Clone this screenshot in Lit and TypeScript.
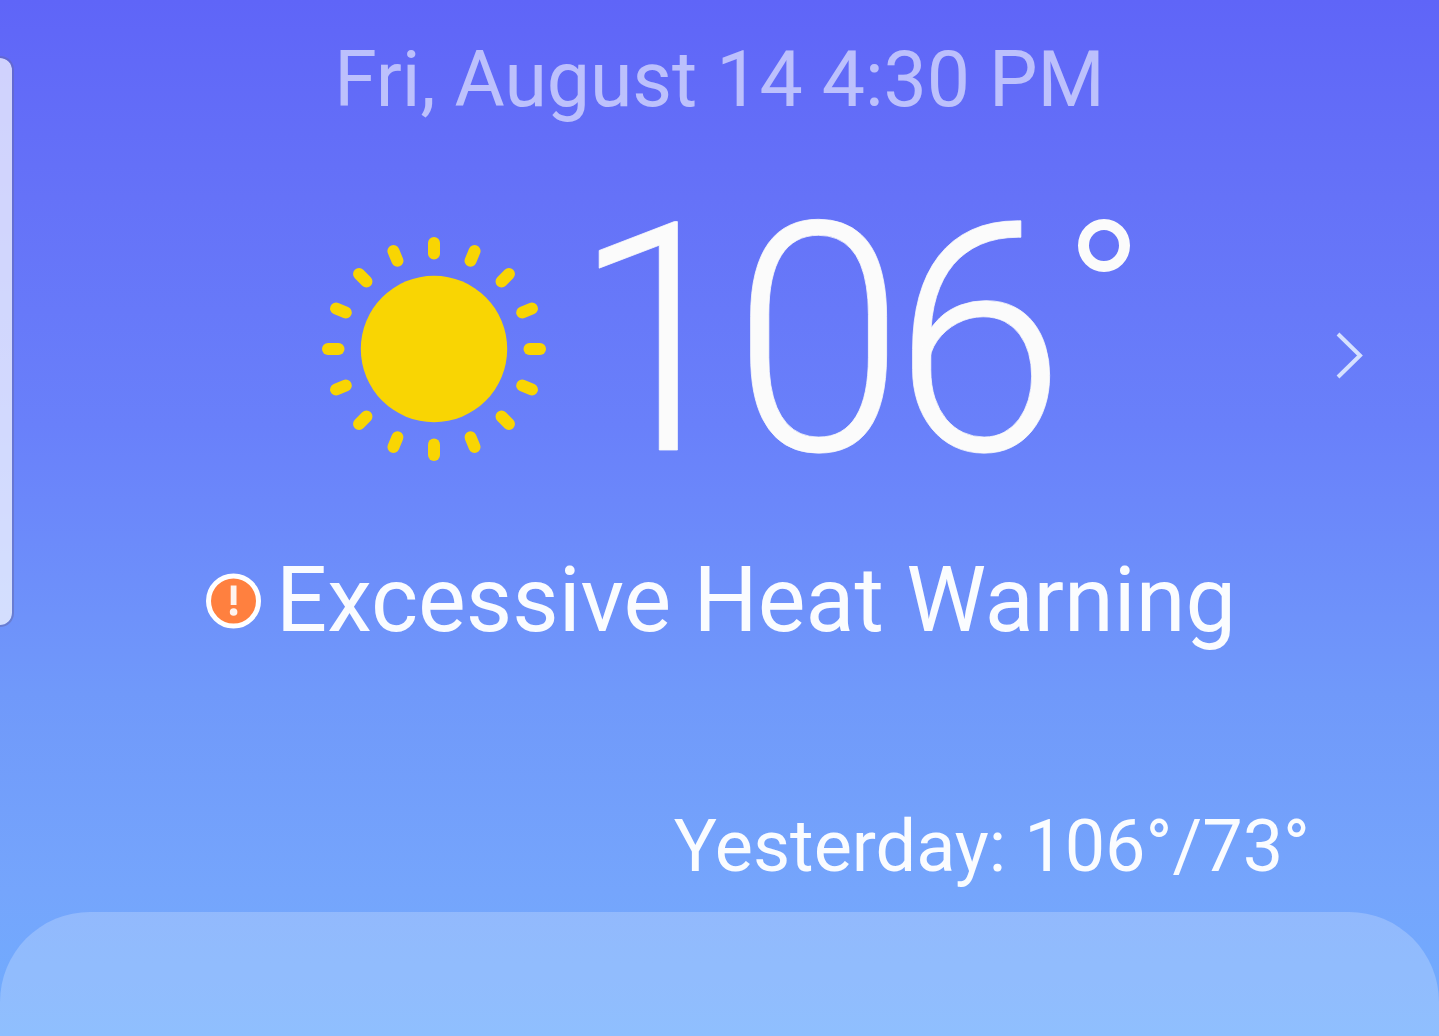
import { css, html, LitElement, svg } from "lit";
import { customElement, property } from "lit/decorators.js";

const RAYS = Array.from({ length: 16 }, (_, i) => i * 22.5);

@customElement("weather-sun")
export class WeatherSun extends LitElement {
  static styles = css`
    :host {
      display: block;
      width: 226px;
      height: 226px;
    }

    svg {
      display: block;
      fill: #f9d503;
    }
  `;

  protected render() {
    return html`
      <svg width="226" height="226" viewBox="-113 -113 226 226">
        <circle r="73.2" />
        ${RAYS.map(angle => svg`
          <rect x="-6" y="-112" width="12" height="22.5" rx="6" transform="rotate(${angle})" />
        `)}
      </svg>
    `;
  }
}

@customElement("app-root")
export class AppRoot extends LitElement {
  static styles = css`
    :host {
      display: flex;
      flex-direction: column;
      position: relative;
      box-sizing: border-box;
      height: 1036px;
      padding-top: 35px;
      overflow: hidden;
      background: linear-gradient(#5f65f8 0, #6572f8 19%, #6980fa 41%, #7099fa 67%, #75a5fc 86%, #70adfe 100%);
      color: #fafcff;
      font-family: Roboto, sans-serif;
      white-space: nowrap;
    }

    .date {
      height: 90px;
      font-size: 77px;
      line-height: 91px;
      letter-spacing: -0.05px;
      text-align: center;
      color: rgba(255, 255, 255, 0.58);
    }

    .current {
      display: flex;
      height: 320px;
      margin-top: 56px;
      padding: 0 75px 0 321px;
    }

    weather-sun {
      margin-top: 55px;
    }

    .temp {
      margin-left: 25px;
      font-size: 320px;
      font-weight: 300;
      line-height: 320px;
      letter-spacing: -12.5px;
      color: #fbfbfb;
      transform: scaleX(0.972);
      transform-origin: left;
      -webkit-text-stroke: 0.8px #fbfbfb;
    }

    .degree {
      box-sizing: border-box;
      width: 52px;
      height: 53px;
      margin: 38px 0 0 10.5px;
      border: 11px solid #fbfbfb;
      border-radius: 50%;
    }

    .next {
      margin: 149px 0 0 auto;
    }

    .warning {
      display: flex;
      align-items: center;
      height: 100px;
      margin-top: 50px;
      padding-left: 206px;
      font-size: 90px;
      line-height: 102px;
    }

    .badge {
      margin-right: 14px;
    }

    .yesterday {
      height: 90px;
      margin-top: 151px;
      padding-right: 129px;
      font-size: 72px;
      line-height: 90px;
      text-align: right;
    }

    .panel {
      flex: 1;
      margin-top: 20px;
      border-radius: 90px 90px 0 0;
      background: rgba(255, 255, 255, 0.22);
    }

    .edge-handle {
      position: absolute;
      left: 0;
      top: 56px;
      width: 12px;
      height: 567px;
      border: 2px solid rgba(100, 105, 170, 0.5);
      border-left: 0;
      border-radius: 0 14px 14px 0;
      background: rgba(255, 255, 255, 0.7);
      background-clip: padding-box;
    }
  `;

  @property()
  public date = "Fri, August 14 4:30 PM";

  @property()
  public temperature = "106";

  @property()
  public alert = "Excessive Heat Warning";

  @property()
  public yesterday = "106°/73°";

  protected render() {
    return html`
      <div class="date">${this.date}</div>
      <div class="current">
        <weather-sun></weather-sun>
        <div class="temp">${this.temperature}</div>
        <div class="degree"></div>
        <svg class="next" width="30" height="50" viewBox="0 0 30 50" fill="none" stroke="#d6e1ff" stroke-width="4">
          <path d="M4 4L26 25.5L4 47" />
        </svg>
      </div>
      <div class="warning">
        <svg class="badge" width="56" height="56" viewBox="0 0 56 56">
          <circle cx="27.5" cy="28" r="25" fill="#ff803f" stroke="#fff" stroke-width="5" />
          <rect x="24.7" y="12.5" width="5.8" height="19.5" fill="#fff4ee" />
          <circle cx="27.6" cy="39" r="3.8" fill="#fff4ee" />
        </svg>
        <span>${this.alert}</span>
      </div>
      <div class="yesterday">Yesterday: ${this.yesterday}</div>
      <div class="panel"></div>
      <div class="edge-handle"></div>
    `;
  }
}
